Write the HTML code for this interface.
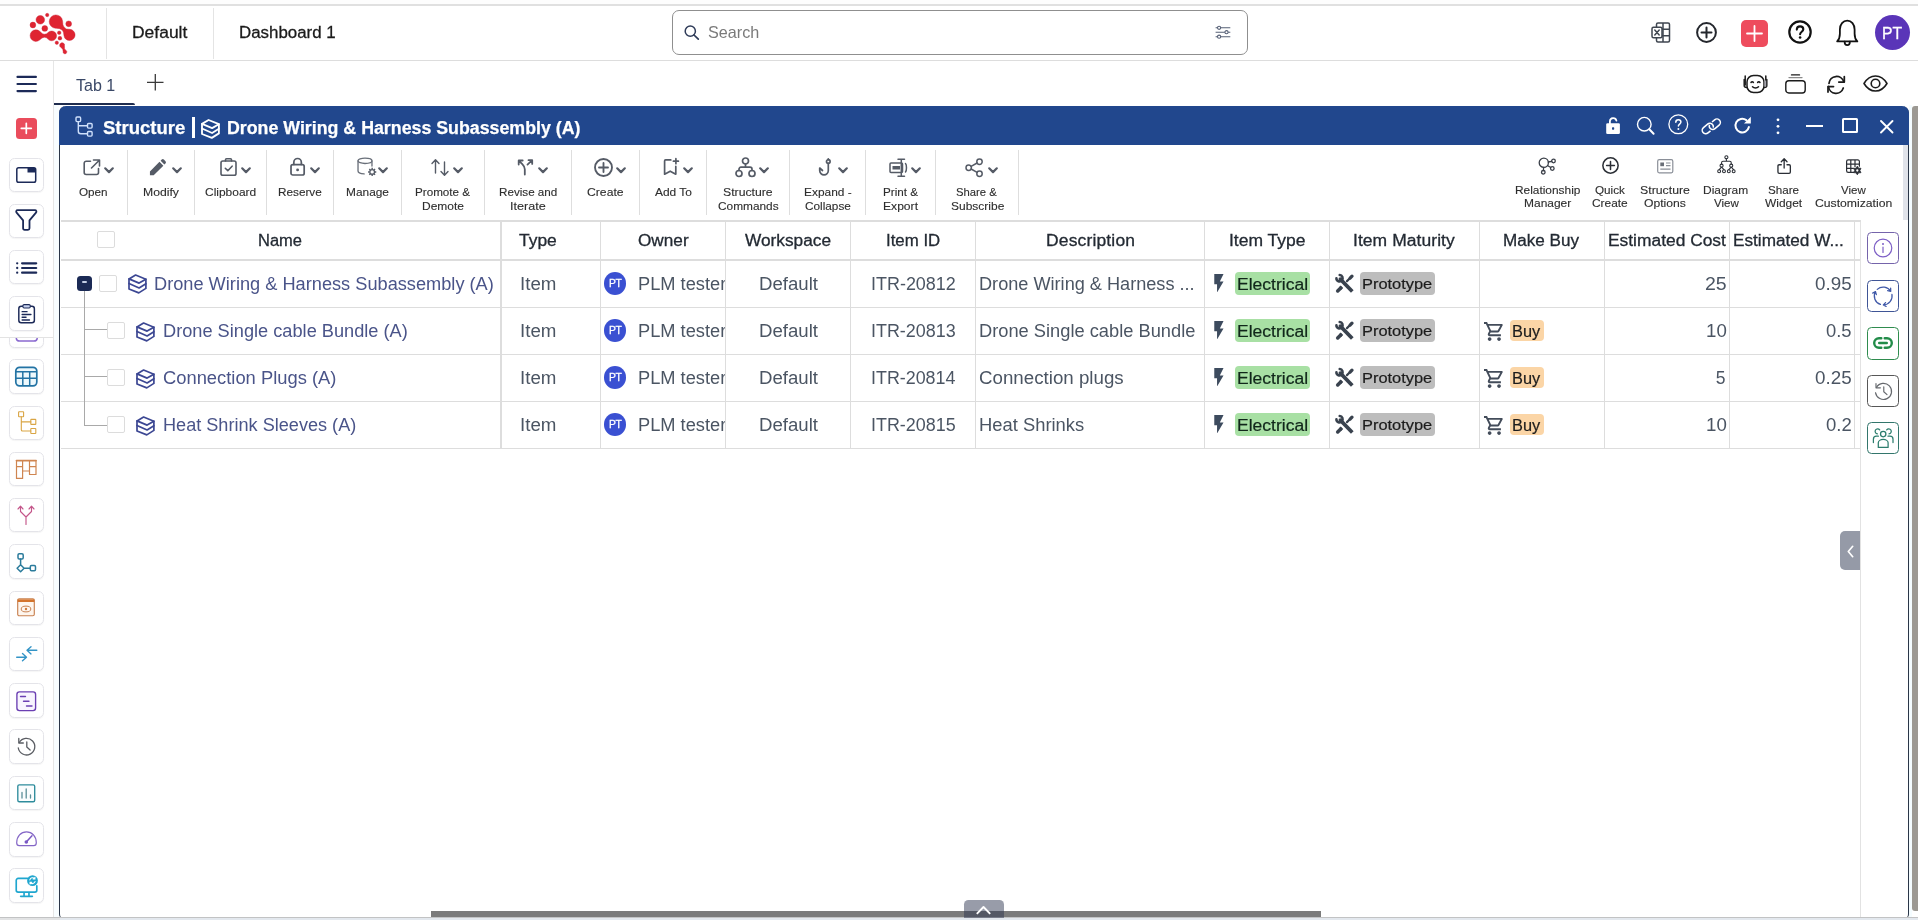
<!DOCTYPE html>
<html lang="en"><head><meta charset="utf-8"><title>Structure - Drone Wiring &amp; Harness Subassembly (A)</title>
<style>
*{box-sizing:border-box;margin:0;padding:0}
html,body{width:1918px;height:920px;overflow:hidden;background:#fff}
body{position:relative;font-family:"Liberation Sans",sans-serif;color:#222}
div,svg,span.t{position:absolute}
span.t{white-space:nowrap;transform-origin:0 0}
svg{overflow:visible}
.sb{border:1px solid #ececf1;border-radius:6px;background:#fff;box-shadow:0 1px 2px rgba(0,0,0,.05)}
#app{left:0;top:0;width:1918px;height:920px;will-change:transform;overflow:hidden}
</style></head>
<body>
<div id="app">
<div style="left:0px;top:0px;width:1918px;height:4px;background:#fdfdfd"></div>
<div style="left:0px;top:4px;width:1918px;height:2px;background:#e0e0e0"></div>
<div style="left:0px;top:60px;width:1918px;height:1px;background:#dddddd"></div>
<div style="left:106px;top:8px;width:1px;height:51px;background:#e4e4e4"></div>
<div style="left:213px;top:8px;width:1px;height:51px;background:#e4e4e4"></div>
<svg style="left:0px;top:0px;" width="100" height="60" viewBox="0 0 100 60" ><g fill="#df2431" stroke="#c92038" stroke-width=".4"><circle cx="47.2" cy="15.0" r="1.7"/><circle cx="40.3" cy="19.8" r="4.3"/><circle cx="32.9" cy="25.0" r="2.9"/><circle cx="44.8" cy="28.4" r="2.9"/><circle cx="68.7" cy="23.8" r="2.9"/><circle cx="59.2" cy="32.8" r="1.8"/><circle cx="59.9" cy="38.2" r="1.9"/><circle cx="56.8" cy="42.7" r="1.7"/><path d="M62.57 20.94 Q62.39 29.78 69.93 29.32 A5.60 5.60 0 1 1 63.93 35.45 Q64.22 27.91 55.39 28.28 A6.70 6.70 0 1 1 62.57 20.94z"/><path d="M39.71 31.23 Q44.44 36.86 48.62 32.09 A4.90 4.90 0 1 1 48.48 39.59 Q44.49 34.66 39.54 40.11 A5.80 5.80 0 1 1 39.71 31.23z"/><path d="M64.49 45.94 Q63.98 48.89 65.77 50.21 A1.90 1.90 0 1 1 63.09 51.33 Q63.40 49.13 60.95 47.42 A2.50 2.50 0 1 1 64.49 45.94z"/></g></svg>
<span class="t" style="left:131.70px;top:24px;font-size:16px;line-height:17px;-webkit-text-stroke:.28px currentColor;color:#1b1b1b;transform:scaleX(1.0916);">Default</span>
<span class="t" style="left:238.95px;top:24px;font-size:16px;line-height:17px;-webkit-text-stroke:.28px currentColor;color:#1b1b1b;transform:scaleX(1.0546);">Dashboard 1</span>
<div style="left:672px;top:10px;width:576px;height:45px;border:1px solid #8f8f8f;border-radius:7px;background:#fff"></div>
<svg style="left:684px;top:25px;" width="16" height="16" viewBox="0 0 16 16" ><circle cx="6.300" cy="6.200" r="5.100" fill="none" stroke="#2e3b58" stroke-width="1.500"/><path d="M10 10l4.300 4.200" stroke="#2e3b58" stroke-width="1.700" stroke-linecap="round"/></svg>
<span class="t" style="left:708.27px;top:23px;font-size:16.5px;line-height:18px;color:#7a7a7a;transform:scaleX(0.9800);">Search</span>
<svg style="left:1214.5px;top:24.5px;" width="16" height="15" viewBox="0 0 16 15" ><g stroke="#566076" stroke-width="1.100" fill="none"><path d="M.6 2.800h14.700M.6 7.200h14.700M.6 11.700h14.700"/></g><g fill="#fff" stroke="#566076" stroke-width="1.100"><circle cx="4.100" cy="2.800" r="1.600"/><circle cx="11.500" cy="7.200" r="1.600"/><circle cx="4.100" cy="11.700" r="1.600"/></g></svg>
<svg style="left:1651px;top:22px;" width="20" height="21" viewBox="0 0 20 21" ><g fill="none" stroke="#3f4650" stroke-width="1.500" stroke-linejoin="round"><rect x="5.500" y="1" width="13" height="19" rx="1.500"/><path d="M5.500 7.300h13M5.500 13.700h13M12 1v19"/><rect x="1" y="5.200" width="10" height="10.600" rx="1.500" fill="#fff"/><path d="M3.800 8l4.400 5M8.200 8l-4.400 5" stroke-linecap="round"/></g></svg>
<svg style="left:1696px;top:22px;" width="21" height="21" viewBox="0 0 21 21" ><g fill="none" stroke="#24272d" stroke-width="2" stroke-linecap="round"><circle cx="10.500" cy="10.500" r="9.400"/><path d="M10.500 5.500v10M5.500 10.500h10"/></g></svg>
<div style="left:1741px;top:19.5px;width:27px;height:27px;background:#ee4c5d;border-radius:5px"></div>
<svg style="left:1741px;top:19.5px;" width="27" height="27" viewBox="0 0 27 27" ><path d="M13.500 6v15M6 13.500h15" stroke="#fff" stroke-width="1.800" stroke-linecap="round"/></svg>
<svg style="left:1788px;top:20px;" width="24" height="24" viewBox="0 0 24 24" ><circle cx="12" cy="12" r="10.700" fill="none" stroke="#111" stroke-width="2.200"/><path d="M8.800 9.600c0-1.900 1.400-3.200 3.300-3.200s3.200 1.200 3.200 2.900c0 2.400-3.200 2.600-3.200 5" fill="none" stroke="#111" stroke-width="2.100" stroke-linecap="round"/><circle cx="12.100" cy="17.500" r="1.300" fill="#111"/></svg>
<svg style="left:1832.5px;top:17.3px;" width="28.5" height="31" viewBox="0 0 24 26" ><g fill="none" stroke="#111" stroke-width="1.500" stroke-linejoin="round" stroke-linecap="round"><path d="M3.500 20.500h17c-1.800-1.800-2.300-3.500-2.300-6.500v-3.500c0-4.300-2.700-7.500-6.200-7.500S5.800 6.200 5.800 10.500V14c0 3-.5 4.700-2.300 6.500z"/><path d="M9.800 20.800c0 1.700.9 2.900 2.200 2.900s2.200-1.200 2.200-2.900"/></g></svg>
<div style="left:1875px;top:15px;width:35px;height:35px;background:#5a35b8;border-radius:50%"></div>
<span class="t" style="left:1882.14px;top:24px;font-size:16.5px;line-height:18px;-webkit-text-stroke:.28px currentColor;color:#fff;transform:scaleX(0.9538);">PT</span>
<div style="left:53px;top:61px;width:1px;height:860px;background:#e6e6e6"></div>
<svg style="left:16.3px;top:75.2px;" width="21.4" height="18" viewBox="0 0 21.400 18" ><path d="M1.500 1.900h18.400M1.500 9h18.400M1.500 16.100h18.400" stroke="#1c2a58" stroke-width="2.200" stroke-linecap="round"/></svg>
<span class="t" style="left:75.88px;top:77px;font-size:15.6px;line-height:17px;color:#3a4867;transform:scaleX(1.0291);">Tab 1</span>
<svg style="left:147px;top:74px;" width="17" height="17" viewBox="0 0 17 17" ><path d="M8.300 0v16.500M0 8.300h16.500" stroke="#3a3a3a" stroke-width="1.300"/></svg>
<div style="left:54px;top:102.8px;width:81px;height:2.2px;background:#1f2c4e;border-radius:0 2px 0 0"></div>
<svg style="left:1743px;top:74px;" width="25" height="20" viewBox="0 0 25 20" ><g fill="none" stroke="#1b1b1b" stroke-width="1.500" stroke-linecap="round" stroke-linejoin="round"><rect x="4" y="1.500" width="17" height="17" rx="6.500"/><path d="M2.200 2v9M22.800 2v9"/><path d="M1.200 5.500v6c0 1.500 1 2 2.600 2M23.800 5.500v6c0 1.500-1 2-2.600 2"/><path d="M22.300 6.500v6" stroke="#a5a5ad" stroke-width="1.800" stroke-linecap="butt"/><path d="M8 8.500c.6-.9 1.800-.9 2.400 0M14.600 8.500c.6-.9 1.800-.9 2.400 0"/><path d="M9.500 12.800c1.500 1.600 4.500 1.600 6 0"/></g></svg>
<svg style="left:1785px;top:74px;" width="21" height="20" viewBox="0 0 21 20" ><g fill="none" stroke="#1b1b1b" stroke-width="1.400" stroke-linecap="round"><rect x=".8" y="6.700" width="19.400" height="12.300" rx="3"/><path d="M4 3.600h13" stroke="#8a8a8a"/><path d="M6.500 .9h8"/></g></svg>
<svg style="left:1827px;top:75px;" width="18.5" height="18.5" viewBox="0 0 18.500 18.500" ><g fill="none" stroke="#1b1b1b" stroke-width="1.750" stroke-linecap="round" stroke-linejoin="round"><path d="M16.800 6.800A7.600 7.600 0 0 0 2 8.300M1.500 11.500a7.600 7.600 0 0 0 14.800 1.500"/><path d="M17.300 1.500v5.500h-5.500M1 17v-5.500h5.500"/></g></svg>
<svg style="left:1863px;top:75px;" width="25" height="17" viewBox="0 0 25 17" ><g fill="none" stroke="#1b1b1b" stroke-width="1.600" stroke-linejoin="round"><path d="M1 8.500C4 3.500 8 1 12.500 1S21 3.500 24 8.500C21 13.500 17 16 12.500 16S4 13.500 1 8.500z"/><circle cx="12.500" cy="8.500" r="4.300"/></g></svg>
<div style="left:54px;top:105px;width:5px;height:812px;background:#f8fdff"></div>
<div style="left:59px;top:106px;width:1850.2px;height:811.5px;background:#fff;border-left:1.400px solid #2a3648;border-right:1.300px solid #2a3648;border-radius:7px 7px 4px 4px"></div>
<div style="left:59px;top:105.6px;width:1850.2px;height:39px;background:#21478d;border-radius:7px 7px 0 0"></div>
<div style="left:1909.2px;top:105px;width:3px;height:812px;background:#f4fcff"></div>
<div style="left:1912px;top:105.5px;width:6.5px;height:805.5px;background:#9c9993;border-radius:3px 0 0 3px"></div>
<div style="left:1903.2px;top:145px;width:4.7px;height:74.5px;background:#e0e3ea"></div>
<svg style="left:74.5px;top:116px;" width="18.5" height="21.5" viewBox="0 0 18.500 21.500" ><g fill="none" stroke="#cfe0fb" stroke-width="1.4" stroke-linecap="round" stroke-linejoin="round"><rect x="1" y="1" width="4.600" height="4.600" rx="1"/><rect x="12.500" y="7.500" width="4.600" height="4.600" rx="1"/><rect x="12.500" y="15.500" width="4.600" height="4.600" rx="1"/><path d="M3.300 5.600v9.700c0 1.700.8 2.500 2.500 2.500h6.700M3.300 9.800h9.200"/></g></svg>
<span class="t" style="left:102.69px;top:118px;font-size:18px;line-height:20px;font-weight:700;color:#fff;transform:scaleX(1.0287);-webkit-text-stroke:.25px #fff;">Structure</span>
<div style="left:192.3px;top:116.5px;width:2.4px;height:21.5px;background:#fff"></div>
<svg style="left:200.8px;top:118.9px;" width="19.6" height="19.9" viewBox="-1 -1 19.600 19.900" ><g fill="none" stroke="#fff" stroke-width="1.85" stroke-linecap="round" stroke-linejoin="round"><path d="M6.600 0L16.900 4.200L10.100 8.100L0 3.900z"/><path d="M0 3.900V14L9.800 17.900L16.900 13.400V4.200"/><path d="M0 8.500L10.100 13L16.900 8.800"/></g></svg>
<span class="t" style="left:226.79px;top:118px;font-size:18px;line-height:20px;font-weight:700;color:#fff;transform:scaleX(0.9875);-webkit-text-stroke:.25px #fff;">Drone Wiring &amp; Harness Subassembly (A)</span>
<svg style="left:0;top:0" width="1918" height="150" viewBox="0 0 1918 150"><rect x="1606.2" y="123.3" width="13.700" height="10.700" rx="1.300" fill="#fff"/><path d="M1609.900 123.500v-2.300a3.300 3.300 0 0 1 6.500-.6" fill="none" stroke="#fff" stroke-width="1.800" stroke-linecap="round"/><rect x="1612" y="127.300" width="2.200" height="2.400" rx=".6" fill="#21478c"/><g fill="none" stroke="#fff" stroke-linecap="round" stroke-linejoin="round"><circle cx="1644.300" cy="124.200" r="6.800" stroke-width="1.400"/><path d="M1649.300 129.300l4.300 4.500" stroke-width="2"/><circle cx="1678.300" cy="124.300" r="9.400" stroke-width="1.300"/><path d="M1675.800 122.300c0-1.500 1.100-2.500 2.600-2.500s2.500 1 2.500 2.300c0 1.900-2.500 2-2.500 3.900" stroke-width="1.500"/><rect x="-6.200" y="-3.500" width="12.400" height="7" rx="3.500" transform="translate(1707.800 128.500) rotate(-40)" stroke-width="1.550" stroke-dasharray="14 4.200 14.600" stroke-linecap="butt"/><rect x="-6.200" y="-3.500" width="12.400" height="7" rx="3.500" transform="translate(1714.800 124.200) rotate(-40)" stroke-width="1.550" stroke-dasharray="28.400 4.200" stroke-dashoffset="-2" stroke-linecap="butt"/><path d="M1748.900 127a6.800 6.800 0 1 1-2.600-6.900" stroke-width="2"/></g><circle cx="1678.400" cy="128.900" r="1" fill="#fff"/><path d="M1750.800 116.800v6.800h-6.800z" fill="#fff"/></svg>
<svg style="left:1776px;top:118px;" width="4" height="17" viewBox="0 0 4 17" ><circle cx="2" cy="1.800" r="1.400" fill="#fff"/><circle cx="2" cy="8.300" r="1.400" fill="#fff"/><circle cx="2" cy="14.800" r="1.400" fill="#fff"/></svg>
<div style="left:1805.5px;top:125px;width:17.2px;height:1.7px;background:#fff"></div>
<div style="left:1842px;top:118.4px;width:16px;height:15px;border:2px solid #fff;border-radius:1.500px"></div>
<svg style="left:1880px;top:120px;" width="13.5" height="13.5" viewBox="0 0 13.500 13.500" ><path d="M1 1l11.500 11.500M12.500 1L1 12.500" stroke="#fff" stroke-width="1.900" stroke-linecap="round"/></svg>
<div style="left:126.80000000000001px;top:150px;width:1.2px;height:64.5px;background:#dedede"></div>
<div style="left:193.8px;top:150px;width:1.2px;height:64.5px;background:#dedede"></div>
<div style="left:265.7px;top:150px;width:1.2px;height:64.5px;background:#dedede"></div>
<div style="left:332.7px;top:150px;width:1.2px;height:64.5px;background:#dedede"></div>
<div style="left:400.79999999999995px;top:150px;width:1.2px;height:64.5px;background:#dedede"></div>
<div style="left:483.79999999999995px;top:150px;width:1.2px;height:64.5px;background:#dedede"></div>
<div style="left:570.6999999999999px;top:150px;width:1.2px;height:64.5px;background:#dedede"></div>
<div style="left:638.8px;top:150px;width:1.2px;height:64.5px;background:#dedede"></div>
<div style="left:705.8px;top:150px;width:1.2px;height:64.5px;background:#dedede"></div>
<div style="left:789.0px;top:150px;width:1.2px;height:64.5px;background:#dedede"></div>
<div style="left:864.9px;top:150px;width:1.2px;height:64.5px;background:#dedede"></div>
<div style="left:934.9px;top:150px;width:1.2px;height:64.5px;background:#dedede"></div>
<div style="left:1017.8px;top:150px;width:1.2px;height:64.5px;background:#dedede"></div>
<svg style="left:82.5px;top:159px;" width="17.5" height="16.5" viewBox="0 0 17.500 16.500" ><g fill="none" stroke="#555b66" stroke-width="1.6" stroke-linecap="round" stroke-linejoin="round"><path d="M7.500 2.200H3.200a2 2 0 0 0-2 2v9.300a2 2 0 0 0 2 2h10.300a2 2 0 0 0 2-2V9.500"/><path d="M10.500 1h6v6M16.300 1.200L8.500 9"/></g></svg>
<svg style="left:104.3px;top:167.2px;" width="10" height="6.5" viewBox="0 0 10 6.500" ><path d="M1.200 1.300l3.800 3.800 3.800-3.800" fill="none" stroke="#555b66" stroke-width="2.200" stroke-linecap="round" stroke-linejoin="round"/></svg>
<span class="t" style="left:79.32px;top:186px;font-size:11.4px;line-height:12px;color:#2e2e2e;transform:scaleX(1.0261);-webkit-text-stroke:.12px #2e2e2e;">Open</span>
<svg style="left:148.2px;top:158.7px;" width="17.8" height="16.8" viewBox="0 0 17.500 16.500" ><path d="M11.300 2.800l3.800 3.800L5.600 16H1.900v-3.800zM12.400 1.700l1.100-1.100a1.500 1.500 0 0 1 2.100 0l1.600 1.600a1.500 1.500 0 0 1 0 2.100l-1.100 1.100z" fill="#555b66"/></svg>
<svg style="left:172px;top:167.2px;" width="10" height="6.5" viewBox="0 0 10 6.500" ><path d="M1.200 1.300l3.800 3.800 3.800-3.800" fill="none" stroke="#555b66" stroke-width="2.200" stroke-linecap="round" stroke-linejoin="round"/></svg>
<span class="t" style="left:142.67px;top:186px;font-size:11.4px;line-height:12px;color:#2e2e2e;transform:scaleX(1.0721);-webkit-text-stroke:.12px #2e2e2e;">Modify</span>
<svg style="left:219.8px;top:157.6px;" width="17" height="18.2" viewBox="0 0 17 18.200" ><g fill="none" stroke="#555b66" stroke-width="1.6" stroke-linecap="round" stroke-linejoin="round"><rect x="1" y="3" width="15" height="14.200" rx="1.800"/><path d="M5.500 3V1.800a1 1 0 0 1 1-1h4a1 1 0 0 1 1 1V3"/><path d="M5.300 10.300l2.500 2.400 4.300-4.500"/></g></svg>
<svg style="left:241px;top:167.2px;" width="10" height="6.5" viewBox="0 0 10 6.500" ><path d="M1.200 1.300l3.800 3.800 3.800-3.800" fill="none" stroke="#555b66" stroke-width="2.200" stroke-linecap="round" stroke-linejoin="round"/></svg>
<span class="t" style="left:204.95px;top:186px;font-size:11.4px;line-height:12px;color:#2e2e2e;transform:scaleX(1.0495);-webkit-text-stroke:.12px #2e2e2e;">Clipboard</span>
<svg style="left:289.7px;top:157px;" width="15.2" height="19.4" viewBox="0 0 15 18.400" ><g fill="none" stroke="#555b66" stroke-width="1.7" stroke-linecap="round" stroke-linejoin="round"><rect x="1" y="7.200" width="13" height="10.200" rx="1.800"/><path d="M3.800 7V4.800a3.700 3.700 0 0 1 7.400 0V7"/></g><circle cx="7.500" cy="12.400" r="1.400" fill="#555b66"/></svg>
<svg style="left:310.3px;top:167.2px;" width="10" height="6.5" viewBox="0 0 10 6.500" ><path d="M1.200 1.300l3.800 3.800 3.800-3.800" fill="none" stroke="#555b66" stroke-width="2.200" stroke-linecap="round" stroke-linejoin="round"/></svg>
<span class="t" style="left:277.81px;top:186px;font-size:11.4px;line-height:12px;color:#2e2e2e;transform:scaleX(1.0314);-webkit-text-stroke:.12px #2e2e2e;">Reserve</span>
<svg style="left:357px;top:157.3px;" width="20.5" height="20" viewBox="0 0 20 19" ><g fill="none" stroke="#6a707a" stroke-width="1.3" stroke-linecap="round" stroke-linejoin="round"><ellipse cx="7.800" cy="3.500" rx="6.800" ry="2.600"/><path d="M1 3.500v10c0 1.500 2.500 2.600 6 2.700M14.600 3.500v5"/></g><circle cx="14.800" cy="14.300" r="2.300" fill="none" stroke="#555b66" stroke-width="1.300"/><path d="M14.800 10.300v1.400M14.800 16.900v1.400M10.800 14.300h1.400M17.400 14.300h1.400M12 11.500l1 1M16.600 16.100l1 1M12 17.100l1-1M16.600 12.500l1-1" stroke="#555b66" stroke-width="1.400"/></svg>
<svg style="left:378px;top:167.2px;" width="10" height="6.5" viewBox="0 0 10 6.500" ><path d="M1.200 1.300l3.800 3.800 3.800-3.800" fill="none" stroke="#555b66" stroke-width="2.200" stroke-linecap="round" stroke-linejoin="round"/></svg>
<span class="t" style="left:345.70px;top:186px;font-size:11.4px;line-height:12px;color:#2e2e2e;transform:scaleX(1.0438);-webkit-text-stroke:.12px #2e2e2e;">Manage</span>
<svg style="left:431px;top:157.5px;" width="18.5" height="19" viewBox="0 0 18.500 18" ><g fill="none" stroke="#555b66" stroke-width="1.4" stroke-linecap="round" stroke-linejoin="round"><path d="M4.500 14.500V1.500M1 5L4.500 1.300 8 5M13.500 3.500v13M10 13l3.500 3.700L17 13"/></g></svg>
<svg style="left:453px;top:167.2px;" width="10" height="6.5" viewBox="0 0 10 6.500" ><path d="M1.200 1.300l3.800 3.800 3.800-3.800" fill="none" stroke="#555b66" stroke-width="2.200" stroke-linecap="round" stroke-linejoin="round"/></svg>
<span class="t" style="left:414.82px;top:186px;font-size:11.4px;line-height:12px;color:#2e2e2e;transform:scaleX(1.0231);-webkit-text-stroke:.12px #2e2e2e;">Promote &amp;</span>
<span class="t" style="left:421.69px;top:200px;font-size:11.4px;line-height:12px;color:#2e2e2e;transform:scaleX(1.0508);-webkit-text-stroke:.12px #2e2e2e;">Demote</span>
<svg style="left:510px;top:150px;" width="30" height="30" viewBox="510 150 30 30" ><g fill="none" stroke="#555b66" stroke-width="1.8" stroke-linecap="round" stroke-linejoin="round"><path d="M524.800 174.500v-5.200c0-2.300-.9-3.600-2.500-5.200l-3.300-3.300M518.700 164.500v-4h4M527.500 164.600l4.400-4.200M528.500 160.200h3.700v3.700"/></g></svg>
<svg style="left:538px;top:167.2px;" width="10" height="6.5" viewBox="0 0 10 6.500" ><path d="M1.200 1.300l3.800 3.800 3.800-3.800" fill="none" stroke="#555b66" stroke-width="2.200" stroke-linecap="round" stroke-linejoin="round"/></svg>
<span class="t" style="left:498.62px;top:186px;font-size:11.4px;line-height:12px;color:#2e2e2e;transform:scaleX(1.0233);-webkit-text-stroke:.12px #2e2e2e;">Revise and</span>
<span class="t" style="left:509.72px;top:200px;font-size:11.4px;line-height:12px;color:#2e2e2e;transform:scaleX(1.1054);-webkit-text-stroke:.12px #2e2e2e;">Iterate</span>
<svg style="left:593.6px;top:158.3px;" width="19" height="19" viewBox="0 0 19 19" ><g fill="none" stroke="#555b66" stroke-width="1.85" stroke-linecap="round" stroke-linejoin="round"><circle cx="9.500" cy="9.500" r="8.500"/><path d="M9.500 5v9M5 9.500h9"/></g></svg>
<svg style="left:616px;top:167.2px;" width="10" height="6.5" viewBox="0 0 10 6.500" ><path d="M1.200 1.300l3.800 3.800 3.800-3.800" fill="none" stroke="#555b66" stroke-width="2.200" stroke-linecap="round" stroke-linejoin="round"/></svg>
<span class="t" style="left:587.14px;top:186px;font-size:11.4px;line-height:12px;color:#2e2e2e;transform:scaleX(1.0694);-webkit-text-stroke:.12px #2e2e2e;">Create</span>
<svg style="left:655px;top:150px;" width="30" height="30" viewBox="655 150 30 30" ><g fill="none" stroke="#555b66" stroke-width="1.7" stroke-linecap="round" stroke-linejoin="round"><path d="M670.800 159.900h-5.200a1 1 0 0 0-1 1v13.300l5.600-3 5.600 3v-7.800"/><path d="M675.900 158.700v5M673.400 161.200h5"/></g></svg>
<svg style="left:683.3px;top:167.2px;" width="10" height="6.5" viewBox="0 0 10 6.500" ><path d="M1.200 1.300l3.800 3.800 3.800-3.800" fill="none" stroke="#555b66" stroke-width="2.200" stroke-linecap="round" stroke-linejoin="round"/></svg>
<span class="t" style="left:654.75px;top:186px;font-size:11.4px;line-height:12px;color:#2e2e2e;transform:scaleX(1.0487);-webkit-text-stroke:.12px #2e2e2e;">Add To</span>
<svg style="left:734.6px;top:157px;" width="21" height="20.5" viewBox="0 0 21 20.500" ><g fill="none" stroke="#555b66" stroke-width="1.7" stroke-linecap="round" stroke-linejoin="round"><circle cx="10.500" cy="4" r="3"/><circle cx="4" cy="16.500" r="3"/><circle cx="17" cy="16.500" r="3"/><path d="M10.500 7v3M4 13.500v-1.300a2 2 0 0 1 2-2h9a2 2 0 0 1 2 2v1.300"/></g></svg>
<svg style="left:758.8px;top:167.2px;" width="10" height="6.5" viewBox="0 0 10 6.500" ><path d="M1.200 1.300l3.800 3.800 3.800-3.800" fill="none" stroke="#555b66" stroke-width="2.200" stroke-linecap="round" stroke-linejoin="round"/></svg>
<span class="t" style="left:723.40px;top:186px;font-size:11.4px;line-height:12px;color:#2e2e2e;transform:scaleX(1.0738);-webkit-text-stroke:.12px #2e2e2e;">Structure</span>
<span class="t" style="left:717.96px;top:200px;font-size:11.4px;line-height:12px;color:#2e2e2e;transform:scaleX(1.0401);-webkit-text-stroke:.12px #2e2e2e;">Commands</span>
<svg style="left:818px;top:158px;" width="14.5" height="18.5" viewBox="0 0 14.500 18.500" ><g fill="none" stroke="#555b66" stroke-width="1.7" stroke-linecap="round" stroke-linejoin="round"><circle cx="10.300" cy="3.500" r="1.800"/><path d="M10.300 5.300v7.200a4.300 4.300 0 0 1-8.600 0V10l2.800 2.500M10.300 1.700V.8"/></g></svg>
<svg style="left:838px;top:167.2px;" width="10" height="6.5" viewBox="0 0 10 6.500" ><path d="M1.200 1.300l3.800 3.800 3.800-3.800" fill="none" stroke="#555b66" stroke-width="2.200" stroke-linecap="round" stroke-linejoin="round"/></svg>
<span class="t" style="left:803.70px;top:186px;font-size:11.4px;line-height:12px;color:#2e2e2e;transform:scaleX(1.0453);-webkit-text-stroke:.12px #2e2e2e;">Expand -</span>
<span class="t" style="left:804.56px;top:200px;font-size:11.4px;line-height:12px;color:#2e2e2e;transform:scaleX(1.0340);-webkit-text-stroke:.12px #2e2e2e;">Collapse</span>
<svg style="left:888.5px;top:157.5px;" width="19.5" height="19.5" viewBox="0 0 19.500 19.500" ><g fill="none" stroke="#555b66" stroke-width="1.5" stroke-linecap="round" stroke-linejoin="round"><rect x="1" y="5" width="12.500" height="9.500" rx="1"/><path d="M9 1.200h6.500M9 18.300h6.500M12.300 1.200v17M16.500 5.500c1.300 1.300 1.300 7 0 8.500"/></g><rect x="3.500" y="8" width="7.500" height="3.500" fill="#555b66"/></svg>
<svg style="left:911px;top:167.2px;" width="10" height="6.5" viewBox="0 0 10 6.500" ><path d="M1.200 1.300l3.800 3.800 3.800-3.800" fill="none" stroke="#555b66" stroke-width="2.200" stroke-linecap="round" stroke-linejoin="round"/></svg>
<span class="t" style="left:882.72px;top:186px;font-size:11.4px;line-height:12px;color:#2e2e2e;transform:scaleX(1.0244);-webkit-text-stroke:.12px #2e2e2e;">Print &amp;</span>
<span class="t" style="left:882.68px;top:200px;font-size:11.4px;line-height:12px;color:#2e2e2e;transform:scaleX(1.0629);-webkit-text-stroke:.12px #2e2e2e;">Export</span>
<svg style="left:964.5px;top:157.5px;" width="18.5" height="19.5" viewBox="0 0 18.500 19.500" ><g fill="none" stroke="#555b66" stroke-width="1.5" stroke-linecap="round" stroke-linejoin="round"><circle cx="14.500" cy="3.700" r="2.700"/><circle cx="3.700" cy="9.700" r="2.700"/><circle cx="14.500" cy="15.800" r="2.700"/><path d="M6.100 8.400l6-3.400M6.100 11l6 3.400"/></g></svg>
<svg style="left:988px;top:167.2px;" width="10" height="6.5" viewBox="0 0 10 6.500" ><path d="M1.200 1.300l3.800 3.800 3.800-3.800" fill="none" stroke="#555b66" stroke-width="2.200" stroke-linecap="round" stroke-linejoin="round"/></svg>
<span class="t" style="left:956.34px;top:186px;font-size:11.4px;line-height:12px;color:#2e2e2e;transform:scaleX(0.9889);-webkit-text-stroke:.12px #2e2e2e;">Share &amp;</span>
<span class="t" style="left:950.51px;top:200px;font-size:11.4px;line-height:12px;color:#2e2e2e;transform:scaleX(1.0522);-webkit-text-stroke:.12px #2e2e2e;">Subscribe</span>
<svg style="left:1537.5px;top:156.7px;" width="18.5" height="18" viewBox="0 0 18.500 18" ><g fill="none" stroke="#3a3f48" stroke-width="1.3" stroke-linecap="round" stroke-linejoin="round"><circle cx="5.800" cy="5.800" r="4.600"/><circle cx="15.500" cy="4" r="1.800"/><circle cx="14.300" cy="11.500" r="1.800"/><circle cx="5.300" cy="15.300" r="1.800"/><path d="M10.300 5l3.400-.7M9.500 8.500l3.200 2M5.600 10.500l-.2 3"/></g></svg>
<span class="t" style="left:1514.50px;top:184px;font-size:11.4px;line-height:12px;color:#2e2e2e;transform:scaleX(1.0428);-webkit-text-stroke:.12px #2e2e2e;">Relationship</span>
<span class="t" style="left:1523.59px;top:197px;font-size:11.4px;line-height:12px;color:#2e2e2e;transform:scaleX(1.0510);-webkit-text-stroke:.12px #2e2e2e;">Manager</span>
<svg style="left:1601.6px;top:157.2px;" width="17" height="17" viewBox="0 0 17.800 17.800" ><g fill="none" stroke="#2b2f36" stroke-width="1.6" stroke-linecap="round" stroke-linejoin="round"><circle cx="8.900" cy="8.900" r="8"/><path d="M8.900 4.800v8.200M4.800 8.900H13"/></g></svg>
<span class="t" style="left:1594.82px;top:184px;font-size:11.4px;line-height:12px;color:#2e2e2e;transform:scaleX(1.0280);-webkit-text-stroke:.12px #2e2e2e;">Quick</span>
<span class="t" style="left:1592.15px;top:197px;font-size:11.4px;line-height:12px;color:#2e2e2e;transform:scaleX(1.0452);-webkit-text-stroke:.12px #2e2e2e;">Create</span>
<svg style="left:1656.8px;top:159px;" width="16.5" height="14.5" viewBox="0 0 16.500 14.500" ><g fill="none" stroke="#8a8f98" stroke-width="1.2" stroke-linecap="round" stroke-linejoin="round"><rect x=".7" y=".7" width="15.100" height="13.100" rx="1.500"/></g><rect x="3.300" y="3.500" width="3.700" height="3.700" fill="#6a6f78"/><path d="M9 4h4.500M9 6.700h4.500M3.300 10.200h10.200" stroke="#8a8f98" stroke-width="1.200"/></svg>
<span class="t" style="left:1640.10px;top:184px;font-size:11.4px;line-height:12px;color:#2e2e2e;transform:scaleX(1.0804);-webkit-text-stroke:.12px #2e2e2e;">Structure</span>
<span class="t" style="left:1644.10px;top:197px;font-size:11.4px;line-height:12px;color:#2e2e2e;transform:scaleX(1.0668);-webkit-text-stroke:.12px #2e2e2e;">Options</span>
<svg style="left:1717.4px;top:154.7px;" width="18.8" height="18.4" viewBox="0 0 19 19" ><g fill="none" stroke="#2b2f36" stroke-width="1.1" stroke-linecap="round" stroke-linejoin="round"><circle cx="9.500" cy="2.300" r="1.600"/><path d="M9.500 4v2.500M4.500 9.300V8a1.500 1.500 0 0 1 1.500-1.500h7A1.500 1.500 0 0 1 14.500 8v1.300"/><circle cx="4.500" cy="11" r="1.600"/><circle cx="14.500" cy="11" r="1.600"/><path d="M2 15.200l2.500-2.700 2.500 2.700M12 15.200l2.500-2.700 2.500 2.700"/><circle cx="2" cy="16.800" r="1.500"/><circle cx="7" cy="16.800" r="1.500"/><circle cx="12" cy="16.800" r="1.500"/><circle cx="17" cy="16.800" r="1.500"/></g></svg>
<span class="t" style="left:1703.39px;top:184px;font-size:11.4px;line-height:12px;color:#2e2e2e;transform:scaleX(1.0506);-webkit-text-stroke:.12px #2e2e2e;">Diagram</span>
<span class="t" style="left:1713.59px;top:197px;font-size:11.4px;line-height:12px;color:#2e2e2e;transform:scaleX(1.0150);-webkit-text-stroke:.12px #2e2e2e;">View</span>
<svg style="left:1776.7px;top:157.6px;" width="14.3" height="16.3" viewBox="0 0 15 17" ><g fill="none" stroke="#2b2f36" stroke-width="1.4" stroke-linecap="round" stroke-linejoin="round"><path d="M4.500 7H2.300a1.300 1.300 0 0 0-1.300 1.300v6.400A1.300 1.300 0 0 0 2.300 16h10.400a1.300 1.300 0 0 0 1.300-1.300V8.300A1.300 1.300 0 0 0 12.700 7h-2.200M7.500 10.500V1M4.500 3.800l3-3 3 3"/></g></svg>
<span class="t" style="left:1768.33px;top:184px;font-size:11.4px;line-height:12px;color:#2e2e2e;transform:scaleX(1.0225);-webkit-text-stroke:.12px #2e2e2e;">Share</span>
<span class="t" style="left:1765.29px;top:197px;font-size:11.4px;line-height:12px;color:#2e2e2e;transform:scaleX(1.0478);-webkit-text-stroke:.12px #2e2e2e;">Widget</span>
<svg style="left:1840px;top:150px;" width="30" height="30" viewBox="1840 150 30 30" ><g fill="none" stroke="#2b2f36" stroke-width="1.200" stroke-linejoin="round"><path d="M1854 172.300h-5.800a1.600 1.600 0 0 1-1.600-1.600v-9.200a1.600 1.600 0 0 1 1.600-1.600h9.600a1.600 1.600 0 0 1 1.600 1.600v5.300"/><path d="M1846.600 164.100h12.800M1846.600 168.300h7.200M1850.800 159.900v12.400M1855 159.900v7"/></g><g transform="translate(1857.300 170.500)"><path d="M0-4.300L1.300-2.300L3.700-2.200L2.600 0L3.700 2.200L1.300 2.300L0 4.300L-1.300 2.300L-3.700 2.200L-2.600 0L-3.700-2.200L-1.300-2.300z" fill="#2b2f36" stroke="#2b2f36" stroke-width=".8" stroke-linejoin="round"/><circle r="1.150" fill="#fff"/></g></svg>
<span class="t" style="left:1841.09px;top:184px;font-size:11.4px;line-height:12px;color:#2e2e2e;transform:scaleX(1.0109);-webkit-text-stroke:.12px #2e2e2e;">View</span>
<span class="t" style="left:1815.04px;top:197px;font-size:11.4px;line-height:12px;color:#2e2e2e;transform:scaleX(1.0699);-webkit-text-stroke:.12px #2e2e2e;">Customization</span>
<div style="left:60.5px;top:220px;width:1800px;height:2px;background:#dddddd"></div>
<div style="left:60.5px;top:259px;width:1800px;height:2px;background:#dddddd"></div>
<div style="left:60.5px;top:307px;width:1800px;height:1px;background:#dddddd"></div>
<div style="left:60.5px;top:354px;width:1800px;height:1px;background:#dddddd"></div>
<div style="left:60.5px;top:401px;width:1800px;height:1px;background:#dddddd"></div>
<div style="left:60.5px;top:448px;width:1800px;height:1px;background:#dddddd"></div>
<div style="left:500px;top:222px;width:2px;height:226px;background:#dddddd"></div>
<div style="left:600px;top:222px;width:1px;height:226px;background:#dddddd"></div>
<div style="left:725px;top:222px;width:1px;height:226px;background:#dddddd"></div>
<div style="left:850px;top:222px;width:1px;height:226px;background:#dddddd"></div>
<div style="left:975px;top:222px;width:1px;height:226px;background:#dddddd"></div>
<div style="left:1204px;top:222px;width:1px;height:226px;background:#dddddd"></div>
<div style="left:1329px;top:222px;width:1px;height:226px;background:#dddddd"></div>
<div style="left:1479px;top:222px;width:1px;height:226px;background:#dddddd"></div>
<div style="left:1604px;top:222px;width:1px;height:226px;background:#dddddd"></div>
<div style="left:1729px;top:222px;width:1px;height:226px;background:#dddddd"></div>
<div style="left:1854px;top:222px;width:1px;height:226px;background:#dddddd"></div>
<div style="left:1860px;top:222px;width:1px;height:696px;background:#e2e2e2"></div>
<div style="left:97px;top:230.5px;width:17.5px;height:17.5px;border:1px solid #dcdcdc;border-radius:2px;background:#fff"></div>
<span class="t" style="left:258.18px;top:232px;font-size:15.6px;line-height:17px;-webkit-text-stroke:.28px currentColor;color:#232a33;transform:scaleX(1.0576);">Name</span>
<span class="t" style="left:519.45px;top:232px;font-size:15.6px;line-height:17px;-webkit-text-stroke:.28px currentColor;color:#232a33;transform:scaleX(1.1175);">Type</span>
<span class="t" style="left:638.13px;top:232px;font-size:15.6px;line-height:17px;-webkit-text-stroke:.28px currentColor;color:#232a33;transform:scaleX(1.1020);">Owner</span>
<span class="t" style="left:744.91px;top:232px;font-size:15.6px;line-height:17px;-webkit-text-stroke:.28px currentColor;color:#232a33;transform:scaleX(1.1069);">Workspace</span>
<span class="t" style="left:885.99px;top:232px;font-size:15.6px;line-height:17px;-webkit-text-stroke:.28px currentColor;color:#232a33;transform:scaleX(1.0786);">Item ID</span>
<span class="t" style="left:1046.10px;top:232px;font-size:15.6px;line-height:17px;-webkit-text-stroke:.28px currentColor;color:#232a33;letter-spacing:0.144px;transform:scaleX(1.1200);">Description</span>
<span class="t" style="left:1228.73px;top:232px;font-size:15.6px;line-height:17px;-webkit-text-stroke:.28px currentColor;color:#232a33;letter-spacing:0.015px;transform:scaleX(1.1200);">Item Type</span>
<span class="t" style="left:1353.13px;top:232px;font-size:15.6px;line-height:17px;-webkit-text-stroke:.28px currentColor;color:#232a33;letter-spacing:0.061px;transform:scaleX(1.1200);">Item Maturity</span>
<span class="t" style="left:1503.13px;top:232px;font-size:15.6px;line-height:17px;-webkit-text-stroke:.28px currentColor;color:#232a33;transform:scaleX(1.0973);">Make Buy</span>
<span class="t" style="left:1607.91px;top:232px;font-size:15.6px;line-height:17px;-webkit-text-stroke:.28px currentColor;color:#232a33;transform:scaleX(1.1149);">Estimated Cost</span>
<span class="t" style="left:1733.13px;top:232px;font-size:15.6px;line-height:17px;-webkit-text-stroke:.28px currentColor;color:#232a33;transform:scaleX(1.1016);">Estimated W...</span>
<div style="left:84px;top:291px;width:1px;height:134.6px;background:#a9a9a9"></div>
<div style="left:84px;top:328.6px;width:23.5px;height:1px;background:#a9a9a9"></div>
<div style="left:84px;top:375.6px;width:23.5px;height:1px;background:#a9a9a9"></div>
<div style="left:84px;top:424.6px;width:23.5px;height:1px;background:#a9a9a9"></div>
<div style="left:77px;top:276px;width:15px;height:15px;background:#1b2a55;border-radius:3.500px"></div>
<div style="left:81.8px;top:281.2px;width:5.6px;height:1.9px;background:#c5cfe6;border-radius:1px"></div>
<div style="left:99px;top:274.8px;width:17.5px;height:17.5px;border:1px solid #dcdcdc;border-radius:2px;background:#fff"></div>
<svg style="left:127.5px;top:274px;" width="19.6" height="19.9" viewBox="-1 -1 19.600 19.900" ><g fill="none" stroke="#3c4793" stroke-width="1.700" stroke-linejoin="round" stroke-linecap="round"><path d="M6.600 0L16.900 4.200L10.100 8.100L0 3.900z"/><path d="M0 3.900V14L9.800 17.900L16.900 13.400V4.200"/><path d="M0 8.500L10.100 13L16.900 8.800"/></g></svg>
<span class="t" style="left:153.94px;top:274px;font-size:17.5px;line-height:20px;color:#4a5489;transform:scaleX(1.0399);">Drone Wiring &amp; Harness Subassembly (A)</span>
<span class="t" style="left:520.42px;top:274px;font-size:17.5px;line-height:20px;color:#4b5563;transform:scaleX(1.0690);">Item</span>
<div style="left:604px;top:272.1px;width:22.4px;height:22.8px;background:#3a50d2;border-radius:50%"></div>
<span class="t" style="left:608.87px;top:277px;font-size:11px;line-height:12px;-webkit-text-stroke:.28px currentColor;color:#fff;letter-spacing:-0.484px;transform:scaleX(0.9400);">PT</span>
<div style="left:630px;top:269.0px;width:95px;height:29px;overflow:hidden"><span class="t" style="left:7.84px;top:5px;font-size:17.5px;line-height:20px;color:#4b5563;transform:scaleX(1.0426);">PLM tester</span></div>
<span class="t" style="left:759.21px;top:274px;font-size:17.5px;line-height:20px;color:#4b5563;transform:scaleX(1.0630);">Default</span>
<span class="t" style="left:870.78px;top:274px;font-size:17.5px;line-height:20px;color:#4b5563;transform:scaleX(1.0257);">ITR-20812</span>
<span class="t" style="left:979.35px;top:274px;font-size:17.5px;line-height:20px;color:#4b5563;transform:scaleX(1.0361);">Drone Wiring &amp; Harness ...</span>
<svg style="left:1214.3px;top:273.9px;overflow:hidden" width="9.8" height="18.5" viewBox="7 2 10 20" ><path d="M7 2v11h3v9l7-12h-4l4-8z" fill="#3d4b5e"/></svg>
<div style="left:1235px;top:272.2px;width:74.7px;height:22.6px;background:#a8e0a4;border-radius:4px"></div>
<span class="t" style="left:1237.10px;top:275px;font-size:16.3px;line-height:18px;color:#10261a;transform:scaleX(1.0759);-webkit-text-stroke:.2px #10261a;">Electrical</span>
<svg style="left:1330px;top:268.0px;" width="30" height="30" viewBox="1330 268 30 30" ><g fill="none" stroke="#39424e" transform="translate(.4 .9)"><path d="M1339.700 278L1351.900 290.600" stroke-width="3.700"/><path d="M1339.300 274.200A3 3 0 0 1 1341.400 279.300A3 3 0 0 1 1336 277.400" stroke-width="2.500" stroke-linecap="round"/><circle cx="1339.900" cy="278.200" r="1.800" fill="#39424e" stroke="none"/><path d="M1346.600 280.200l2.600-2.600" stroke-width="2.200" stroke-linecap="round"/><path d="M1349.700 277.200l1.900-1.900" stroke-width="3.300" stroke-linecap="round"/><path d="M1340.300 287.100l-3 3" stroke-width="3.500" stroke-linecap="round"/><path d="M1341.500 285.900l-1.500 1.500" stroke-width="3.500"/></g></svg>
<div style="left:1360.2px;top:272.2px;width:74.7px;height:22.6px;background:#bdbdbd;border-radius:4px"></div>
<span class="t" style="left:1362.19px;top:276px;font-size:14.8px;line-height:16px;color:#1c1c1c;transform:scaleX(1.1092);-webkit-text-stroke:.2px #1c1c1c;">Prototype</span>
<span class="t" style="left:1705.42px;top:274px;font-size:17.5px;line-height:20px;color:#4b5563;transform:scaleX(1.1147);">25</span>
<span class="t" style="left:1814.85px;top:274px;font-size:17.5px;line-height:20px;color:#4b5563;transform:scaleX(1.0754);">0.95</span>
<div style="left:107.3px;top:321.8px;width:17.5px;height:17.5px;border:1px solid #dcdcdc;border-radius:2px;background:#fff"></div>
<svg style="left:136.4px;top:321.9px;" width="19.6" height="19.9" viewBox="-1 -1 19.600 19.900" ><g fill="none" stroke="#3c4793" stroke-width="1.700" stroke-linejoin="round" stroke-linecap="round"><path d="M6.600 0L16.900 4.200L10.100 8.100L0 3.900z"/><path d="M0 3.900V14L9.800 17.900L16.900 13.400V4.200"/><path d="M0 8.500L10.100 13L16.900 8.800"/></g></svg>
<span class="t" style="left:163.24px;top:321px;font-size:17.5px;line-height:20px;color:#4a5489;transform:scaleX(1.0398);">Drone Single cable Bundle (A)</span>
<span class="t" style="left:520.42px;top:321px;font-size:17.5px;line-height:20px;color:#4b5563;transform:scaleX(1.0690);">Item</span>
<div style="left:604px;top:319.1px;width:22.4px;height:22.8px;background:#3a50d2;border-radius:50%"></div>
<span class="t" style="left:608.87px;top:324px;font-size:11px;line-height:12px;-webkit-text-stroke:.28px currentColor;color:#fff;letter-spacing:-0.484px;transform:scaleX(0.9400);">PT</span>
<div style="left:630px;top:316.0px;width:95px;height:29px;overflow:hidden"><span class="t" style="left:7.84px;top:5px;font-size:17.5px;line-height:20px;color:#4b5563;transform:scaleX(1.0426);">PLM tester</span></div>
<span class="t" style="left:759.21px;top:321px;font-size:17.5px;line-height:20px;color:#4b5563;transform:scaleX(1.0630);">Default</span>
<span class="t" style="left:870.79px;top:321px;font-size:17.5px;line-height:20px;color:#4b5563;transform:scaleX(1.0234);">ITR-20813</span>
<span class="t" style="left:979.34px;top:321px;font-size:17.5px;line-height:20px;color:#4b5563;transform:scaleX(1.0443);">Drone Single cable Bundle</span>
<svg style="left:1214.3px;top:320.9px;overflow:hidden" width="9.8" height="18.5" viewBox="7 2 10 20" ><path d="M7 2v11h3v9l7-12h-4l4-8z" fill="#3d4b5e"/></svg>
<div style="left:1235px;top:319.2px;width:74.7px;height:22.6px;background:#a8e0a4;border-radius:4px"></div>
<span class="t" style="left:1237.10px;top:322px;font-size:16.3px;line-height:18px;color:#10261a;transform:scaleX(1.0759);-webkit-text-stroke:.2px #10261a;">Electrical</span>
<svg style="left:1330px;top:315.0px;" width="30" height="30" viewBox="1330 268 30 30" ><g fill="none" stroke="#39424e" transform="translate(.4 .9)"><path d="M1339.700 278L1351.900 290.600" stroke-width="3.700"/><path d="M1339.300 274.200A3 3 0 0 1 1341.400 279.300A3 3 0 0 1 1336 277.400" stroke-width="2.500" stroke-linecap="round"/><circle cx="1339.900" cy="278.200" r="1.800" fill="#39424e" stroke="none"/><path d="M1346.600 280.200l2.600-2.600" stroke-width="2.200" stroke-linecap="round"/><path d="M1349.700 277.200l1.900-1.900" stroke-width="3.300" stroke-linecap="round"/><path d="M1340.300 287.100l-3 3" stroke-width="3.500" stroke-linecap="round"/><path d="M1341.500 285.900l-1.500 1.500" stroke-width="3.500"/></g></svg>
<div style="left:1360.2px;top:319.2px;width:74.7px;height:22.6px;background:#bdbdbd;border-radius:4px"></div>
<span class="t" style="left:1362.19px;top:323px;font-size:14.8px;line-height:16px;color:#1c1c1c;transform:scaleX(1.1092);-webkit-text-stroke:.2px #1c1c1c;">Prototype</span>
<svg style="left:1484px;top:321.5px;" width="18.8" height="19" viewBox="1 2 20 20" ><path fill="#434c5a" d="M15.550 13c.75 0 1.410-.41 1.750-1.030l3.580-6.490c.37-.66-.11-1.480-.87-1.480H5.210l-.94-2H1v2h2l3.600 7.590-1.350 2.440C4.520 15.370 5.480 17 7 17h12v-2H7l1.100-2h7.450zM6.160 6h12.150l-2.760 5H8.530L6.160 6zM7 18c-1.100 0-1.990.9-1.990 2S5.900 22 7 22s2-.9 2-2-.9-2-2-2zm10 0c-1.100 0-1.990.9-1.990 2s.89 2 1.990 2 2-.9 2-2-.9-2-2-2z"/></svg>
<div style="left:1510.2px;top:320.0px;width:33.8px;height:21.3px;background:#fbd5a6;border-radius:4px"></div>
<span class="t" style="left:1512.49px;top:322px;font-size:16.3px;line-height:18px;color:#1c1c1c;transform:scaleX(1.0042);-webkit-text-stroke:.2px #1c1c1c;">Buy</span>
<span class="t" style="left:1706.20px;top:321px;font-size:17.5px;line-height:20px;color:#4b5563;transform:scaleX(1.0684);">10</span>
<span class="t" style="left:1825.86px;top:321px;font-size:17.5px;line-height:20px;color:#4b5563;transform:scaleX(1.0512);">0.5</span>
<div style="left:107.3px;top:368.8px;width:17.5px;height:17.5px;border:1px solid #dcdcdc;border-radius:2px;background:#fff"></div>
<svg style="left:136.4px;top:368.9px;" width="19.6" height="19.9" viewBox="-1 -1 19.600 19.900" ><g fill="none" stroke="#3c4793" stroke-width="1.700" stroke-linejoin="round" stroke-linecap="round"><path d="M6.600 0L16.900 4.200L10.100 8.100L0 3.900z"/><path d="M0 3.900V14L9.800 17.900L16.900 13.400V4.200"/><path d="M0 8.500L10.100 13L16.900 8.800"/></g></svg>
<span class="t" style="left:162.58px;top:368px;font-size:17.5px;line-height:20px;color:#4a5489;transform:scaleX(1.0485);">Connection Plugs (A)</span>
<span class="t" style="left:520.42px;top:368px;font-size:17.5px;line-height:20px;color:#4b5563;transform:scaleX(1.0690);">Item</span>
<div style="left:604px;top:366.1px;width:22.4px;height:22.8px;background:#3a50d2;border-radius:50%"></div>
<span class="t" style="left:608.87px;top:371px;font-size:11px;line-height:12px;-webkit-text-stroke:.28px currentColor;color:#fff;letter-spacing:-0.484px;transform:scaleX(0.9400);">PT</span>
<div style="left:630px;top:363.0px;width:95px;height:29px;overflow:hidden"><span class="t" style="left:7.84px;top:5px;font-size:17.5px;line-height:20px;color:#4b5563;transform:scaleX(1.0426);">PLM tester</span></div>
<span class="t" style="left:759.21px;top:368px;font-size:17.5px;line-height:20px;color:#4b5563;transform:scaleX(1.0630);">Default</span>
<span class="t" style="left:870.79px;top:368px;font-size:17.5px;line-height:20px;color:#4b5563;transform:scaleX(1.0212);">ITR-20814</span>
<span class="t" style="left:978.86px;top:368px;font-size:17.5px;line-height:20px;color:#4b5563;transform:scaleX(1.0696);">Connection plugs</span>
<svg style="left:1214.3px;top:367.9px;overflow:hidden" width="9.8" height="18.5" viewBox="7 2 10 20" ><path d="M7 2v11h3v9l7-12h-4l4-8z" fill="#3d4b5e"/></svg>
<div style="left:1235px;top:366.2px;width:74.7px;height:22.6px;background:#a8e0a4;border-radius:4px"></div>
<span class="t" style="left:1237.10px;top:369px;font-size:16.3px;line-height:18px;color:#10261a;transform:scaleX(1.0759);-webkit-text-stroke:.2px #10261a;">Electrical</span>
<svg style="left:1330px;top:362.0px;" width="30" height="30" viewBox="1330 268 30 30" ><g fill="none" stroke="#39424e" transform="translate(.4 .9)"><path d="M1339.700 278L1351.900 290.600" stroke-width="3.700"/><path d="M1339.300 274.200A3 3 0 0 1 1341.400 279.300A3 3 0 0 1 1336 277.400" stroke-width="2.500" stroke-linecap="round"/><circle cx="1339.900" cy="278.200" r="1.800" fill="#39424e" stroke="none"/><path d="M1346.600 280.200l2.600-2.600" stroke-width="2.200" stroke-linecap="round"/><path d="M1349.700 277.200l1.900-1.900" stroke-width="3.300" stroke-linecap="round"/><path d="M1340.300 287.100l-3 3" stroke-width="3.500" stroke-linecap="round"/><path d="M1341.500 285.900l-1.500 1.500" stroke-width="3.500"/></g></svg>
<div style="left:1360.2px;top:366.2px;width:74.7px;height:22.6px;background:#bdbdbd;border-radius:4px"></div>
<span class="t" style="left:1362.19px;top:370px;font-size:14.8px;line-height:16px;color:#1c1c1c;transform:scaleX(1.1092);-webkit-text-stroke:.2px #1c1c1c;">Prototype</span>
<svg style="left:1484px;top:368.5px;" width="18.8" height="19" viewBox="1 2 20 20" ><path fill="#434c5a" d="M15.550 13c.75 0 1.410-.41 1.750-1.030l3.580-6.490c.37-.66-.11-1.480-.87-1.480H5.210l-.94-2H1v2h2l3.600 7.590-1.350 2.440C4.520 15.370 5.480 17 7 17h12v-2H7l1.100-2h7.450zM6.160 6h12.150l-2.760 5H8.530L6.160 6zM7 18c-1.100 0-1.990.9-1.990 2S5.900 22 7 22s2-.9 2-2-.9-2-2-2zm10 0c-1.100 0-1.990.9-1.990 2s.89 2 1.990 2 2-.9 2-2-.9-2-2-2z"/></svg>
<div style="left:1510.2px;top:367.0px;width:33.8px;height:21.3px;background:#fbd5a6;border-radius:4px"></div>
<span class="t" style="left:1512.49px;top:369px;font-size:16.3px;line-height:18px;color:#1c1c1c;transform:scaleX(1.0042);-webkit-text-stroke:.2px #1c1c1c;">Buy</span>
<span class="t" style="left:1715.70px;top:368px;font-size:17.5px;line-height:20px;color:#4b5563;">5</span>
<span class="t" style="left:1814.85px;top:368px;font-size:17.5px;line-height:20px;color:#4b5563;transform:scaleX(1.0754);">0.25</span>
<div style="left:107.3px;top:415.8px;width:17.5px;height:17.5px;border:1px solid #dcdcdc;border-radius:2px;background:#fff"></div>
<svg style="left:136.4px;top:415.9px;" width="19.6" height="19.9" viewBox="-1 -1 19.600 19.900" ><g fill="none" stroke="#3c4793" stroke-width="1.700" stroke-linejoin="round" stroke-linecap="round"><path d="M6.600 0L16.900 4.200L10.100 8.100L0 3.900z"/><path d="M0 3.900V14L9.800 17.900L16.900 13.400V4.200"/><path d="M0 8.500L10.100 13L16.900 8.800"/></g></svg>
<span class="t" style="left:163.25px;top:415px;font-size:17.5px;line-height:20px;color:#4a5489;transform:scaleX(1.0348);">Heat Shrink Sleeves (A)</span>
<span class="t" style="left:520.42px;top:415px;font-size:17.5px;line-height:20px;color:#4b5563;transform:scaleX(1.0690);">Item</span>
<div style="left:604px;top:413.1px;width:22.4px;height:22.8px;background:#3a50d2;border-radius:50%"></div>
<span class="t" style="left:608.87px;top:418px;font-size:11px;line-height:12px;-webkit-text-stroke:.28px currentColor;color:#fff;letter-spacing:-0.484px;transform:scaleX(0.9400);">PT</span>
<div style="left:630px;top:410.0px;width:95px;height:29px;overflow:hidden"><span class="t" style="left:7.84px;top:5px;font-size:17.5px;line-height:20px;color:#4b5563;transform:scaleX(1.0426);">PLM tester</span></div>
<span class="t" style="left:759.21px;top:415px;font-size:17.5px;line-height:20px;color:#4b5563;transform:scaleX(1.0630);">Default</span>
<span class="t" style="left:870.79px;top:415px;font-size:17.5px;line-height:20px;color:#4b5563;transform:scaleX(1.0234);">ITR-20815</span>
<span class="t" style="left:979.33px;top:415px;font-size:17.5px;line-height:20px;color:#4b5563;transform:scaleX(1.0501);">Heat Shrinks</span>
<svg style="left:1214.3px;top:414.9px;overflow:hidden" width="9.8" height="18.5" viewBox="7 2 10 20" ><path d="M7 2v11h3v9l7-12h-4l4-8z" fill="#3d4b5e"/></svg>
<div style="left:1235px;top:413.2px;width:74.7px;height:22.6px;background:#a8e0a4;border-radius:4px"></div>
<span class="t" style="left:1237.10px;top:416px;font-size:16.3px;line-height:18px;color:#10261a;transform:scaleX(1.0759);-webkit-text-stroke:.2px #10261a;">Electrical</span>
<svg style="left:1330px;top:409.0px;" width="30" height="30" viewBox="1330 268 30 30" ><g fill="none" stroke="#39424e" transform="translate(.4 .9)"><path d="M1339.700 278L1351.900 290.600" stroke-width="3.700"/><path d="M1339.300 274.200A3 3 0 0 1 1341.400 279.300A3 3 0 0 1 1336 277.400" stroke-width="2.500" stroke-linecap="round"/><circle cx="1339.900" cy="278.200" r="1.800" fill="#39424e" stroke="none"/><path d="M1346.600 280.200l2.600-2.600" stroke-width="2.200" stroke-linecap="round"/><path d="M1349.700 277.200l1.900-1.900" stroke-width="3.300" stroke-linecap="round"/><path d="M1340.300 287.100l-3 3" stroke-width="3.500" stroke-linecap="round"/><path d="M1341.500 285.900l-1.500 1.500" stroke-width="3.500"/></g></svg>
<div style="left:1360.2px;top:413.2px;width:74.7px;height:22.6px;background:#bdbdbd;border-radius:4px"></div>
<span class="t" style="left:1362.19px;top:417px;font-size:14.8px;line-height:16px;color:#1c1c1c;transform:scaleX(1.1092);-webkit-text-stroke:.2px #1c1c1c;">Prototype</span>
<svg style="left:1484px;top:415.5px;" width="18.8" height="19" viewBox="1 2 20 20" ><path fill="#434c5a" d="M15.550 13c.75 0 1.410-.41 1.750-1.030l3.580-6.490c.37-.66-.11-1.480-.87-1.480H5.210l-.94-2H1v2h2l3.600 7.590-1.350 2.440C4.520 15.370 5.480 17 7 17h12v-2H7l1.100-2h7.450zM6.160 6h12.150l-2.760 5H8.530L6.160 6zM7 18c-1.100 0-1.990.9-1.990 2S5.900 22 7 22s2-.9 2-2-.9-2-2-2zm10 0c-1.100 0-1.990.9-1.990 2s.89 2 1.990 2 2-.9 2-2-.9-2-2-2z"/></svg>
<div style="left:1510.2px;top:414.0px;width:33.8px;height:21.3px;background:#fbd5a6;border-radius:4px"></div>
<span class="t" style="left:1512.49px;top:416px;font-size:16.3px;line-height:18px;color:#1c1c1c;transform:scaleX(1.0042);-webkit-text-stroke:.2px #1c1c1c;">Buy</span>
<span class="t" style="left:1706.20px;top:415px;font-size:17.5px;line-height:20px;color:#4b5563;transform:scaleX(1.0684);">10</span>
<span class="t" style="left:1825.86px;top:415px;font-size:17.5px;line-height:20px;color:#4b5563;transform:scaleX(1.0593);">0.2</span>
<div style="left:16px;top:118.3px;width:20.6px;height:20.6px;background:#ea4c5c;border-radius:3.500px"></div>
<svg style="left:16px;top:118.3px;" width="20.6" height="20.6" viewBox="0 0 20.600 20.600" ><path d="M10.300 5.300v10M5.300 10.300h10" stroke="#fff" stroke-width="1.700" stroke-linecap="round"/></svg>
<div style="left:9.4px;top:157.8px;width:34.3px;height:34.7px;border:1.100px solid #e4e4e9;border-radius:5.500px;background:#fff;box-shadow:0 1px 1px rgba(0,0,0,.04)"></div>
<svg style="left:16.3px;top:167px;" width="20.5" height="16" viewBox="0 0 20.500 16" ><g fill="none" stroke="#1c2a58" stroke-width="1.5" stroke-linecap="round" stroke-linejoin="round"><rect x=".8" y=".8" width="18.900" height="14.400" rx="1.800"/></g><path d="M11.500 .8h6.400a1.800 1.800 0 0 1 1.800 1.800v2.900h-8.200z" fill="#1c2a58"/></svg>
<div style="left:9.4px;top:203.8px;width:34.3px;height:34.7px;border:1.100px solid #e4e4e9;border-radius:5.500px;background:#fff;box-shadow:0 1px 1px rgba(0,0,0,.04)"></div>
<svg style="left:14.8px;top:209px;" width="22.6" height="22.4" viewBox="0 0 22.600 22.400" ><g fill="none" stroke="#1c2a58" stroke-width="1.8" stroke-linecap="round" stroke-linejoin="round"><path d="M2.600 1.200h17.400c1.300 0 1.900 1.400 1 2.400l-6.500 7.800v7.900c0 .9-.6 1.500-1.500 1.500h-3.400c-.9 0-1.500-.6-1.500-1.500v-7.900L1.600 3.600c-.9-1-.3-2.400 1-2.400z"/></g></svg>
<div style="left:9.4px;top:249.8px;width:34.3px;height:34.7px;border:1.100px solid #e4e4e9;border-radius:5.500px;background:#fff;box-shadow:0 1px 1px rgba(0,0,0,.04)"></div>
<svg style="left:15.9px;top:261.7px;" width="21.5" height="12" viewBox="0 0 21.500 12" ><g fill="#1c2a58"><circle cx="1.200" cy="1.300" r="1.150"/><circle cx="1.200" cy="6" r="1.150"/><circle cx="1.200" cy="10.700" r="1.150"/><rect x="5" y=".2" width="16.300" height="2.200" rx="1.100"/><rect x="5" y="4.900" width="16.300" height="2.200" rx="1.100"/><rect x="5" y="9.600" width="16.300" height="2.200" rx="1.100"/></g></svg>
<div style="left:9.4px;top:296.3px;width:34.3px;height:34.7px;border:1.100px solid #e4e4e9;border-radius:5.500px;background:#fff;box-shadow:0 1px 1px rgba(0,0,0,.04)"></div>
<svg style="left:18px;top:304.2px;" width="17.2" height="19.6" viewBox="0 0 17.500 20" ><g fill="none" stroke="#1c2a58" stroke-width="1.5" stroke-linecap="round" stroke-linejoin="round"><rect x=".8" y="2.300" width="15.900" height="16.900" rx="2.500"/></g><rect x="5" y=".6" width="7.500" height="3.400" rx="1.200" fill="#c9d4f0" stroke="#1c2a58" stroke-width="1.100"/><g fill="none" stroke="#1c2a58" stroke-width="1.4" stroke-linecap="round" stroke-linejoin="round"><path d="M4.200 7.800h5M4.200 10.700h9M4.200 13.500h4M4.200 16.300h7.500"/></g></svg>
<div style="left:0px;top:337px;width:53px;height:1px;background:#e3e3e3"></div>
<div style="left:0px;top:338px;width:53px;height:12px;overflow:hidden"><div style="left:9.4px;top:-24.5px;width:34.3px;height:34.7px;border:1.100px solid #e4e4e9;border-radius:5.500px;background:#fff;box-shadow:0 1px 1px rgba(0,0,0,.04)"></div><svg style="left:0px;top:0px;" width="53" height="12" viewBox="0 338 53 12" ><path d="M16.300 338.300q.3 2.700 3.200 2.700h14.500q2.900 0 3.200-2.700" fill="none" stroke="#8a6ad0" stroke-width="1.500" stroke-linecap="round"/></svg></div>
<div style="left:9.4px;top:359.3px;width:34.3px;height:34.7px;border:1.100px solid #e4e4e9;border-radius:5.500px;background:#fff;box-shadow:0 1px 1px rgba(0,0,0,.04)"></div>
<div style="left:9.4px;top:405.5px;width:34.3px;height:34.7px;border:1.100px solid #e4e4e9;border-radius:5.500px;background:#fff;box-shadow:0 1px 1px rgba(0,0,0,.04)"></div>
<div style="left:9.4px;top:451.8px;width:34.3px;height:34.7px;border:1.100px solid #e4e4e9;border-radius:5.500px;background:#fff;box-shadow:0 1px 1px rgba(0,0,0,.04)"></div>
<svg style="left:0px;top:350px;" width="54" height="140" viewBox="0 350 54 140" ><rect x="15.800" y="367.300" width="21" height="18.600" rx="3.800" fill="#eef9fd" stroke="#2373a4" stroke-width="1.700"/><path d="M15.800 371.800h21M15.800 378.300h21M22.800 371.800v14.100M29.700 371.800v14.100" stroke="#2373a4" stroke-width="1.500" fill="none"/><g fill="none" stroke="#d9a544" stroke-width="1.1" stroke-linecap="round" stroke-linejoin="round"><rect x="18.600" y="411.700" width="5" height="5" rx=".5"/><rect x="30.800" y="419.400" width="5" height="5" rx=".5"/><rect x="30.800" y="428.500" width="5" height="5" rx=".5"/><path d="M21.300 416.700v13c0 .9.400 1.300 1.300 1.300h8.200M21.300 421.900h9.500"/></g><g fill="none" stroke="#cf8550" stroke-width="1.2" stroke-linecap="round" stroke-linejoin="round"><path d="M16.400 460.600h19.700" stroke-width="1.600"/><path d="M16.500 460.600v17.800h6.100v-17.800M29.500 460.600v13.900h6.500v-13.900M16.500 466.600h6.100M29.500 466.600h6.500M22.600 471h6.900"/></g></svg>
<div style="left:9.4px;top:497.8px;width:34.3px;height:34.7px;border:1.100px solid #e4e4e9;border-radius:5.500px;background:#fff;box-shadow:0 1px 1px rgba(0,0,0,.04)"></div>
<svg style="left:17.4px;top:505.4px;" width="18" height="20.5" viewBox="0 0 18 20.500" ><g fill="none" stroke="#c4568a" stroke-width="1.15" stroke-linecap="round" stroke-linejoin="round"><path d="M9 19.500V12M9 12L3.500 6.500V1.500M9 12l5.500-5.500V1.500M1 4l2.500-2.800L6 4M12 4l2.500-2.800L17 4"/></g></svg>
<div style="left:9.4px;top:544.3px;width:34.3px;height:34.7px;border:1.100px solid #e4e4e9;border-radius:5.500px;background:#fff;box-shadow:0 1px 1px rgba(0,0,0,.04)"></div>
<svg style="left:16.7px;top:552.6px;" width="19.5" height="19.5" viewBox="0 0 19.500 19.500" ><g fill="none" stroke="#2c7c9c" stroke-width="1.5" stroke-linecap="round" stroke-linejoin="round"><rect x="1" y=".8" width="5.200" height="5.200" rx="1.200"/><rect x="13.300" y="12.600" width="5.200" height="5.200" rx="1.200"/><path d="M3.600 6v5.700M7.200 15.200h6.100M3.600 11.700l3.500 3.500-3.500 3.500-3.500-3.500z" /></g></svg>
<div style="left:9.4px;top:590.8px;width:34.3px;height:34.7px;border:1.100px solid #e4e4e9;border-radius:5.500px;background:#fff;box-shadow:0 1px 1px rgba(0,0,0,.04)"></div>
<svg style="left:17px;top:598.3px;" width="18" height="18.5" viewBox="0 0 18 18.500" ><rect x=".7" y=".7" width="16.600" height="17" rx="1.500" fill="#fef6ee" stroke="#c98150" stroke-width="1.150"/><path d="M.7 1.300h16.600v2.700H.7z" fill="#d4742c"/><ellipse cx="9" cy="11" rx="4.800" ry="2.900" fill="none" stroke="#c98150" stroke-width="1"/><circle cx="9" cy="11" r="1.200" fill="#cf7a3c"/></svg>
<div style="left:9.4px;top:636.8px;width:34.3px;height:34.7px;border:1.100px solid #e4e4e9;border-radius:5.500px;background:#fff;box-shadow:0 1px 1px rgba(0,0,0,.04)"></div>
<svg style="left:15.7px;top:646px;" width="21.5" height="15.5" viewBox="0 0 21.500 15.500" ><g fill="none" stroke="#3394c6" stroke-width="1.4" stroke-linecap="round" stroke-linejoin="round"><path d="M11 4.300h9.800M15 .7l-4 3.600 4 3.600M.7 11.200h9.800M6.500 7.600l4 3.600-4 3.600"/></g></svg>
<div style="left:9.4px;top:683.0999999999999px;width:34.3px;height:34.7px;border:1.100px solid #e4e4e9;border-radius:5.500px;background:#fff;box-shadow:0 1px 1px rgba(0,0,0,.04)"></div>
<svg style="left:16.3px;top:690.7px;" width="20.5" height="20.5" viewBox="0 0 20.500 20.500" ><rect x=".9" y=".9" width="18.700" height="18.700" rx="2.500" fill="#f8f4fe" stroke="#6b3fb2" stroke-width="1.350"/><path d="M4.500 5.500h5M7.500 10.200h5.500M10.500 15h5.500" stroke="#6b3fb2" stroke-width="1.350" stroke-linecap="round"/></svg>
<div style="left:9.4px;top:729.3px;width:34.3px;height:34.7px;border:1.100px solid #e4e4e9;border-radius:5.500px;background:#fff;box-shadow:0 1px 1px rgba(0,0,0,.04)"></div>
<svg style="left:17px;top:737px;" width="18.5" height="19" viewBox="0 0 18.500 19" ><g fill="none" stroke="#5a5d63" stroke-width="1.3" stroke-linecap="round" stroke-linejoin="round"><path d="M2.300 5.500A8.300 8.300 0 1 1 1.300 11"/><path d="M1.800 1.500v4.500h4.500M9.800 5v5l3.300 3"/></g></svg>
<div style="left:9.4px;top:775.8px;width:34.3px;height:34.7px;border:1.100px solid #e4e4e9;border-radius:5.500px;background:#fff;box-shadow:0 1px 1px rgba(0,0,0,.04)"></div>
<svg style="left:17px;top:783.5px;" width="18.5" height="18.5" viewBox="0 0 18.500 18.500" ><rect x=".8" y=".8" width="16.900" height="16.900" rx="1.500" fill="#fafdfe" stroke="#2e8c9c" stroke-width="1.350"/><path d="M5 14V8.500M9.200 14V5M13.500 14v-3" stroke="#5a8f98" stroke-width="1.300" stroke-linecap="round"/></svg>
<div style="left:9.4px;top:822.0999999999999px;width:34.3px;height:34.7px;border:1.100px solid #e4e4e9;border-radius:5.500px;background:#fff;box-shadow:0 1px 1px rgba(0,0,0,.04)"></div>
<svg style="left:15.7px;top:831.3px;" width="21" height="15.5" viewBox="0 0 21 15.500" ><g fill="none" stroke="#8466c6" stroke-width="1.2" stroke-linecap="round" stroke-linejoin="round"><path d="M3.300 14.700h14.400c1.700 0 2.600-1 2.600-3C20.300 5.500 16 .8 10.500 .8S.7 5.500.7 11.700c0 2 .9 3 2.600 3z"/></g><path d="M10 11.300l6-6.500" stroke="#7a58c4" stroke-width="1.500" stroke-linecap="round"/><circle cx="10.300" cy="11" r="1.800" fill="#7a58c4"/></svg>
<div style="left:9.4px;top:868.3px;width:34.3px;height:34.7px;border:1.100px solid #e4e4e9;border-radius:5.500px;background:#fff;box-shadow:0 1px 1px rgba(0,0,0,.04)"></div>
<svg style="left:15.2px;top:874.2px;" width="24.5" height="23.5" viewBox="0 0 24.500 24" ><g fill="none" stroke="#1fa6cf" stroke-width="1.7" stroke-linecap="round" stroke-linejoin="round"><path d="M12.500 4.500H3A2 2 0 0 0 1 6.500v10a2 2 0 0 0 2 2h17a2 2 0 0 0 2-2v-4.500M9 18.500v4M14 18.500v4M5.500 22.800h12"/></g><g transform="translate(-1.400 1)"><circle cx="19" cy="5.800" r="5.500" fill="#1fa6cf"/><path d="M16.300 5a2.900 2.900 0 0 1 5-1.200M21.700 6.600a2.900 2.900 0 0 1-5 1.200M21.500 2.300v1.800h-1.800M16.500 9.300V7.500h1.800" fill="none" stroke="#fff" stroke-width="1.100" stroke-linecap="round"/></g></svg>
<div style="left:0px;top:917px;width:1918px;height:3px;background:#e2e3e4"></div>
<div style="left:60px;top:917px;width:1858px;height:3px;background:#e3e8ee"></div>
<div style="left:0px;top:917px;width:1918px;height:1px;background:#c2c3c4"></div>
<div style="left:431px;top:911px;width:890px;height:6px;background:#7b7b7b"></div>
<div style="left:964.3px;top:899.9px;width:39.6px;height:18.1px;background:rgba(44,54,80,.49);border-radius:4.500px 4.500px 0 0"></div>
<svg style="left:975.8px;top:906px;" width="15" height="8.5" viewBox="0 0 15 8.500" ><path d="M.8 7.800l6.700-6.800 6.700 6.800" fill="none" stroke="#fff" stroke-width="1.900" stroke-linejoin="round"/></svg>
<div style="left:1840px;top:530.8px;width:20.1px;height:39.7px;background:#959aa7;border-radius:5px 0 0 5px"></div>
<svg style="left:1846.5px;top:544.5px;" width="7" height="13" viewBox="0 0 7 13" ><path d="M5.700 1.300L1.300 6.500l4.400 5.200" fill="none" stroke="#fff" stroke-width="1.700" stroke-linecap="round" stroke-linejoin="round"/></svg>
<div style="left:1867px;top:232.20000000000002px;width:32px;height:32.3px;border:1.100px solid #7564ab;border-radius:4.500px;background:#fff"></div>
<svg style="left:1873px;top:238.3px;" width="20" height="20" viewBox="0 0 20 20" ><g fill="none" stroke="#7d5fc6" stroke-width="1.2" stroke-linecap="round" stroke-linejoin="round"><circle cx="10" cy="10" r="8.800"/><path d="M10 9v5.500"/></g><circle cx="10" cy="6" r="1" fill="#7d5fc6"/></svg>
<div style="left:1867px;top:279.79999999999995px;width:32px;height:32.3px;border:1.100px solid #3f5596;border-radius:4.500px;background:#fff"></div>
<svg style="left:1866px;top:279px;" width="34" height="34" viewBox="1866 279 34 34" ><g fill="none" stroke="#4059a8" stroke-width="1.25" stroke-linecap="round" stroke-linejoin="round"><path d="M1877.24 289.39A8.9 8.9 0 0 1 1890.75 291.28M1890.64 288.09L1890.75 291.28M1887.62 290.62L1890.75 291.28M1891.94 294.30A8.9 8.9 0 0 1 1883.36 304.90M1886.15 306.45L1883.36 304.90M1885.54 302.56L1883.36 304.90M1880.45 304.46A8.9 8.9 0 0 1 1875.49 291.55M1872.72 293.15L1875.49 291.55M1876.37 294.63L1875.49 291.55"/></g></svg>
<div style="left:1867px;top:327.29999999999995px;width:32px;height:32.3px;border:1.100px solid #2f8c4e;border-radius:4.500px;background:#fff"></div>
<svg style="left:1873px;top:337px;" width="20" height="12" viewBox="0 0 20 12" ><g fill="none" stroke="#228c49" stroke-width="2.4" stroke-linecap="round" stroke-linejoin="round"><path d="M8.300 1.200H6a4.800 4.800 0 0 0 0 9.600h2.300M11.700 1.200H14a4.800 4.800 0 0 1 0 9.600h-2.300M6.200 6h7.600"/></g></svg>
<div style="left:1867px;top:374.7px;width:32px;height:32.3px;border:1.100px solid #575757;border-radius:4.500px;background:#fff"></div>
<svg style="left:1874px;top:381.5px;" width="18.5" height="18.5" viewBox="0 0 18.500 19" ><g fill="none" stroke="#66696e" stroke-width="1.2" stroke-linecap="round" stroke-linejoin="round"><path d="M2.300 5.500A8.300 8.300 0 1 1 1.300 11"/><path d="M1.800 1.500v4.500h4.500M9.800 5v5l3.300 3"/></g></svg>
<div style="left:1867px;top:421.9px;width:32px;height:32.3px;border:1.100px solid #33766c;border-radius:4.500px;background:#fff"></div>
<svg style="left:1866px;top:421px;" width="34" height="34" viewBox="1866 421 34 34" ><g fill="none" stroke="#2c7d6d" stroke-width="1.25" stroke-linecap="round" stroke-linejoin="round"><circle cx="1883.200" cy="434.100" r="2.700"/><path d="M1878.300 447.400v-4.600a4.900 3.400 0 0 1 9.800 0v4.600z"/><path d="M1879.700 429.900a2.500 2.500 0 1 0-2.300 3.900M1886.700 429.900a2.500 2.500 0 1 1 2.300 3.900"/><path d="M1878.400 436.200h-2a3 3 0 0 0-3 3v3.300M1888 436.200h2a3 3 0 0 1 3 3v3.300"/></g></svg>
</div>
</body></html>
